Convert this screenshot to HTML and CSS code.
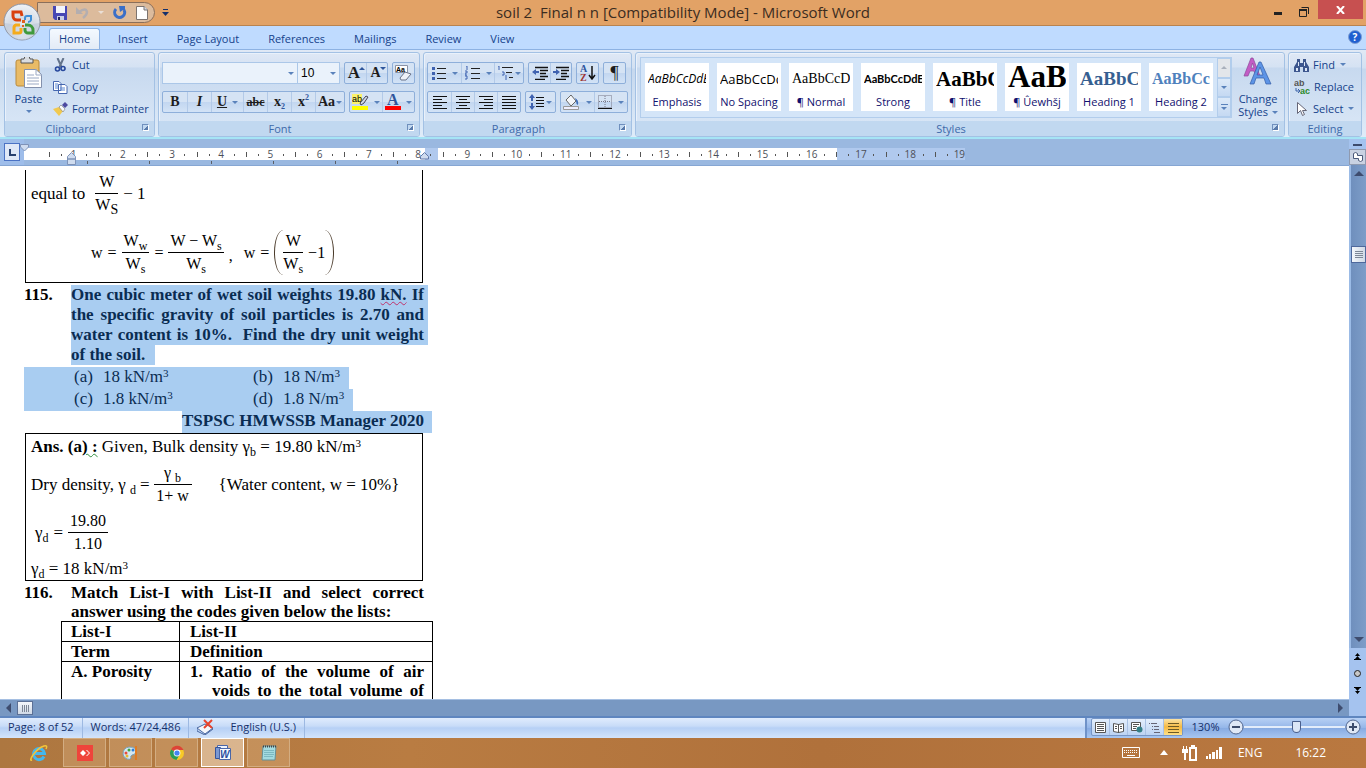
FILE: index.html
```
<!DOCTYPE html>
<html lang="en">
<head>
    <meta charset="UTF-8">
    <meta name="viewport" content="width=device-width, initial-scale=1.0">
    <title>soil 2 Final n n [Compatibility Mode] - Microsoft Word</title>
    <link rel="stylesheet" href="styles.css">
</head>
<body>
    <!-- Title bar -->
    <header class="titlebar">
        <button class="orb" aria-label="Office Button">
            <svg width="38" height="38" viewBox="0 0 38 38">
                <defs>
                    <radialGradient id="orbFill" cx="50%" cy="85%" r="90%">
                        <stop offset="0" stop-color="#ffffff"/>
                        <stop offset="0.5" stop-color="#d3dae4"/>
                        <stop offset="1" stop-color="#f4f6f9"/>
                    </radialGradient>
                </defs>
                <circle cx="19" cy="19" r="18" fill="url(#orbFill)" stroke="#8d95a5"/>
                <path d="M2 20a17 17 0 0 0 34 0q-17 4-34 0z" fill="#b8c4d6" opacity=".5"/>
                <g fill="none" stroke-width="3">
                    <path d="M18 17h-4a4 4 0 0 1-4-4V9h8l1 4" stroke="#d9400e"/>
                    <path d="M22 17v-2a2 2 0 0 1 2-2h4v4a3 3 0 0 1-3 2" stroke="#3f8fd8" stroke-width="2"/>
                    <path d="M17 22h-4a3 3 0 0 0-2 3v5h5a2 2 0 0 0 2-2v-3" stroke="#f5ab1b"/>
                    <path d="M22 22h3a5 5 0 0 1 5 5v3h-5a3 3 0 0 1-3-3v-2" stroke="#3f9a3c"/>
                </g>
                <path d="M19 17h3v3h-3zM19 22h2v2h-2z" fill="#e0601c"/>
            </svg>
        </button>
        <div class="quick">
            <button aria-label="Save">
                <svg width="14" height="14" viewBox="0 0 14 14"><path d="M0 0h14v14H2l-2-2z" fill="#4747b4"/><path d="M3 0h9v7H3z" fill="#f2f4fb"/><path d="M4 10h7v4H4z" fill="#c9cfe6"/><path d="M5 11h2v3H5z" fill="#22225e"/></svg>
            </button>
            <button aria-label="Undo">
                <svg width="13" height="13" viewBox="0 0 13 13"><path d="M3 6q7-5 8 0 0 3-4 6" fill="none" stroke="#b3aeb0" stroke-width="2.4"/><path d="M0 1v7h7z" fill="#b3aeb0"/></svg>
            </button>
            <i class="arr arr-pale"></i>
            <button aria-label="Redo">
                <svg width="14" height="14" viewBox="0 0 14 14"><path d="M3 3a5 5 0 1 0 8 1" fill="none" stroke="#3a6fc8" stroke-width="3"/><path d="M6 0h6v6l-2-2-3 2z" fill="#3a6fc8"/></svg>
            </button>
            <button aria-label="New">
                <svg width="12" height="14" viewBox="0 0 12 14"><path d="M.5.5H8L11.500 4v9.500H.5z" fill="#fff" stroke="#7c7470"/><path d="M8 0v4h4" fill="#cdd6e4" stroke="#7c7470"/></svg>
            </button>
        </div>
        <button class="customize" aria-label="Customize Quick Access Toolbar">
            <svg width="7" height="8" viewBox="0 0 7 8"><path d="M1 0h5v1H1zM0 3h7L3.500 7z" fill="#15306b"/></svg>
        </button>
        <h1 class="title">soil 2&nbsp; Final n n [Compatibility Mode] - Microsoft Word</h1>
        <div class="window-buttons">
            <button aria-label="Minimize"><svg width="8" height="14"><path d="M0 9h8v3H0z" fill="#222"/></svg></button>
            <button aria-label="Restore"><svg width="10" height="14"><path d="M2.500 4.500h7V11M.5 6.500h7v7h-7z" fill="none" stroke="#222"/><path d="M0 6h8v2H0z" fill="#222"/></svg></button>
            <button class="close" aria-label="Close"><svg width="9" height="8" viewBox="0 0 9 8"><path d="M1 0l7 8M8 0L1 8" stroke="#fff" stroke-width="2"/></svg></button>
        </div>
    </header>

    <nav class="tabs">
        <button class="tab active">Home</button>
        <button class="tab">Insert</button>
        <button class="tab">Page Layout</button>
        <button class="tab">References</button>
        <button class="tab">Mailings</button>
        <button class="tab">Review</button>
        <button class="tab">View</button>
        <button class="help" aria-label="Help">?</button>
    </nav>

    <!-- Ribbon -->
    <section class="ribbon">
        <div class="group clipboard">
            <div class="group-body">
                <button class="big">
                    <svg width="28" height="32" viewBox="0 0 28 32"><rect x="1" y="3" width="23" height="26" rx="2" fill="#e9bb66" stroke="#b98b3d"/><path d="M6 2h3a3 3 0 0 1 6 0h3v4H6z" fill="#d9dce0" stroke="#555"/><path d="M9.500 12.500H21l5.500 5V30.500h-17z" fill="#fff" stroke="#8391ad"/><path d="M21 12v6h6M12 18h7M12 21h12M12 24h12M12 27h12" fill="none" stroke="#9aa9c4"/></svg>
                    <span>Paste</span>
                    <i class="arr"></i>
                </button>
                <div class="stack">
                    <button><svg width="14" height="14" viewBox="0 0 14 14"><path d="M4 0l4 9M10 0L6 9" stroke="#64748b" stroke-width="2"/><circle cx="4" cy="11" r="2" fill="none" stroke="#27489c" stroke-width="1.600"/><circle cx="9.500" cy="10.500" r="2" fill="none" stroke="#27489c" stroke-width="1.600"/></svg>Cut</button>
                    <button><svg width="15" height="13" viewBox="0 0 15 13"><path d="M.5.5H6l2 2v7H.5zM5.500 3.500H12l2 2v7H5.500z" fill="#fff" stroke="#4567b0"/><path d="M2 3h3M2 5h3M2 7h3M7 7h5M7 9h5" stroke="#5a87d0"/></svg>Copy</button>
                    <button><svg width="15" height="14" viewBox="0 0 15 14"><path d="M0 7l6-2 4 4-4 5z" fill="#f1c94f"/><path d="M6 5l2-2 4 4-2 3z" fill="#fafafa" stroke="#777" stroke-width=".6"/><path d="M9 3l3-3 3 3-3 3z" fill="#4d4aa0"/></svg>Format Painter</button>
                </div>
            </div>
            <div class="group-label">Clipboard<i class="launch"></i></div>
        </div>

        <div class="group font">
            <div class="group-body rows">
                <div class="row">
                    <div class="combos">
                        <label class="combo name"><select aria-label="Font"><option></option></select></label>
                        <label class="combo size"><select aria-label="Font size"><option>10</option></select></label>
                    </div>
                    <div class="bar">
                        <button aria-label="Grow Font"><span class="serif big-a">A</span><i class="arr up"></i></button>
                        <button aria-label="Shrink Font"><span class="serif">A</span><i class="arr raised"></i></button>
                    </div>
                    <div class="bar">
                        <button aria-label="Clear Formatting"><svg width="17" height="16" viewBox="0 0 17 16"><path d="M.5.5h12v7H.5z" fill="#fff" stroke="#8a93a6"/><text x="1" y="7" font-family="Liberation Sans" font-size="7" font-weight="bold">Aa</text><path d="M5 13l5-6 6 2-5 6H6z" fill="#eef1f8" stroke="#6b7388"/></svg></button>
                    </div>
                </div>
                <div class="row">
                    <div class="bar roomy">
                        <button><b class="serif">B</b></button>
                        <button><em class="serif">I</em></button>
                        <button class="split"><u class="serif">U</u><i class="arr"></i></button>
                        <button><s class="serif">abc</s></button>
                        <button class="serif">x<sub>2</sub></button>
                        <button class="serif">x<sup>2</sup></button>
                        <button class="tight"><span class="serif">Aa</span><i class="arr"></i></button>
                    </div>
                    <div class="bar">
                        <button class="split" aria-label="Text Highlight Color"><svg width="17" height="16" viewBox="0 0 17 16"><path d="M0 0h10v10H0z" fill="#fbf36b"/><text x="0" y="8" font-family="Liberation Sans" font-size="9">ab</text><path d="M8 9l6-7 2 1-4 6-3 2z" fill="#cfd8e8" stroke="#445"/><path d="M0 12h16v4H0z" fill="#ff0"/></svg><i class="arr"></i></button>
                        <button class="split" aria-label="Font Color"><svg width="16" height="16" viewBox="0 0 16 16"><text x="2" y="11" font-family="Liberation Serif" font-size="16" font-weight="bold" fill="#2f559c">A</text><path d="M0 12h16v4H0z" fill="#f00"/></svg><i class="arr"></i></button>
                    </div>
                </div>
            </div>
            <div class="group-label">Font<i class="launch"></i></div>
        </div>

        <div class="group paragraph">
            <div class="group-body rows">
                <div class="row">
                    <div class="bar roomy">
                        <button class="split" aria-label="Bullets"><svg width="14" height="14"><path d="M5 2.500h9M5 7.500h9M5 12.500h9" stroke="#222"/><path d="M0 1h3v3H0zM0 6h3v3H0zM0 11h3v3H0z" fill="#3f62b0"/></svg><i class="arr"></i></button>
                        <button class="split" aria-label="Numbering"><svg width="15" height="14"><path d="M6 2.500h9M6 7.500h9M6 12.500h9" stroke="#222"/><path d="M1 0h1v4M0 5h2v2H0v2h2M0 10h2v3H0" fill="none" stroke="#3f62b0"/></svg><i class="arr"></i></button>
                        <button class="tight" aria-label="Multilevel List"><svg width="17" height="14"><path d="M5 1.500h11M9 6.500h6M12 11.500h4" stroke="#222"/><path d="M1 0h1v4M5 6h2v3H5M9 9v5" fill="none" stroke="#3f62b0"/></svg><i class="arr"></i></button>
                    </div>
                    <div class="bar">
                        <button aria-label="Decrease Indent"><svg width="16" height="14"><path d="M3 1.500h13M8 4.500h8M8 7.500h6M8 10.500h8M3 13.500h10" stroke="#111" stroke-width="1.500"/><path d="M0 6l4-3v6zM4 5h3v2H4z" fill="#3f62b0"/></svg></button>
                        <button aria-label="Increase Indent"><svg width="16" height="14"><path d="M3 1.500h13M8 4.500h8M8 7.500h6M8 10.500h8M3 13.500h10" stroke="#111" stroke-width="1.500"/><path d="M7 6L3 3v6zM0 5h3v2H0z" fill="#3f62b0"/></svg></button>
                    </div>
                    <div class="bar">
                        <button aria-label="Sort"><svg width="16" height="16"><text x="0" y="7" font-family="Liberation Serif" font-size="10" font-weight="bold" fill="#2f559c">A</text><text x="0" y="16" font-family="Liberation Serif" font-size="10" font-weight="bold" fill="#9e3535">Z</text><path d="M12 1v12M9 10l3 4 3-4" fill="none" stroke="#111" stroke-width="1.500"/></svg></button>
                    </div>
                    <div class="bar"><button class="pilcrow" aria-label="Show paragraph marks">¶</button></div>
                </div>
                <div class="row">
                    <div class="bar roomy aligns">
                        <button aria-label="Align Left"><svg width="14" height="13"><path d="M0 .5h14M0 3.500h9M0 6.500h14M0 9.500h9M0 12.500h14" stroke="#111"/></svg></button>
                        <button aria-label="Center"><svg width="14" height="13"><path d="M0 .5h14M3 3.500h8M0 6.500h14M3 9.500h8M0 12.500h14" stroke="#111"/></svg></button>
                        <button aria-label="Align Right"><svg width="14" height="13"><path d="M0 .5h14M5 3.500h9M0 6.500h14M5 9.500h9M0 12.500h14" stroke="#111"/></svg></button>
                        <button aria-label="Justify"><svg width="14" height="13"><path d="M0 .5h14M0 3.500h14M0 6.500h14M0 9.500h14M0 12.500h14" stroke="#111"/></svg></button>
                    </div>
                    <div class="bar">
                        <button class="tight" aria-label="Line spacing"><svg width="16" height="16"><path d="M7 3.500h8M7 6.500h8M7 9.500h8M7 12.500h8" stroke="#111"/><path d="M3 0l3 4H0zM3 16l3-4H0zM2 4h2v3H2zM2 9h2v3H2z" fill="#3f62b0"/></svg><i class="arr"></i></button>
                    </div>
                    <div class="bar">
                        <button class="split" aria-label="Shading"><svg width="17" height="16"><path d="M3 6l5-5 5 6-5 5z" fill="#f4f6fa" stroke="#666"/><path d="M12 4q4 2 3 7-2-1-2-4z" fill="#3b6cb8"/><path d="M.5 12.500h15v3H.5z" fill="#eef" stroke="#999"/></svg><i class="arr"></i></button>
                        <button class="split" aria-label="Borders"><svg width="14" height="14"><path d="M.5.5h13v12H.5zM7 1v11M1 6.500h12" fill="none" stroke="#778" stroke-dasharray="1 1"/><path d="M0 13.500h14" stroke="#111"/></svg><i class="arr"></i></button>
                    </div>
                </div>
            </div>
            <div class="group-label">Paragraph<i class="launch"></i></div>
        </div>

        <div class="group styles">
            <div class="group-body">
                <div class="gallery">
                    <div class="cards">
                        <button class="card"><span class="sample emphasis">AaBbCcDdE</span><span>Emphasis</span></button>
                        <button class="card"><span class="sample spacing">AaBbCcDd</span><span>No Spacing</span></button>
                        <button class="card"><span class="sample normal">AaBbCcDd</span><span>¶ Normal</span></button>
                        <button class="card"><span class="sample strong">AaBbCcDdE</span><span>Strong</span></button>
                        <button class="card"><span class="sample head-title">AaBbC</span><span>¶ Title</span></button>
                        <button class="card"><span class="sample huge">AaB</span><span>¶ Ûewhšj</span></button>
                        <button class="card"><span class="sample h-one">AaBbCc</span><span>Heading 1</span></button>
                        <button class="card"><span class="sample h-two">AaBbCc</span><span>Heading 2</span></button>
                    </div>
                    <div class="gallery-nav">
                        <button aria-label="Scroll up"><i class="arr up grey"></i></button>
                        <button aria-label="Scroll down"><i class="arr"></i></button>
                        <button class="more" aria-label="More styles"><i class="arr"></i></button>
                    </div>
                </div>
                <button class="big change">
                    <svg width="30" height="28" viewBox="0 0 30 28"><path d="M1 19L8 1h2l7 18h-4l-2-5H7l-2 5zM8 11h3L9.500 6z" fill="#c35cc5" stroke="#8d4a9b" stroke-width=".7"/><path d="M7 27L16 5h2l10 22h-5l-2-6h-8l-2 6zM14 18h6l-3-8z" fill="#5d94e6" stroke="#345da6" stroke-width=".7"/></svg>
                    <span>Change</span>
                    <span>Styles <i class="arr"></i></span>
                </button>
            </div>
            <div class="group-label">Styles<i class="launch"></i></div>
        </div>

        <div class="group editing">
            <div class="group-body">
                <div class="stack">
                    <button><svg width="15" height="13" viewBox="0 0 15 13"><path d="M3 0h3v4h3V0h3v3l3 5v5H9V8H6v5H0V8l3-5z" fill="#3c568e"/><path d="M2 9h2v3H2zM11 9h2v3h-2zM4 3h1v4H4zM10 3h1v4h-1z" fill="#dce6f6"/></svg>Find <i class="arr"></i></button>
                    <button><svg width="16" height="14" viewBox="0 0 16 14"><text x="0" y="6" font-family="Liberation Sans" font-size="9" font-weight="bold" fill="#555">ab</text><text x="6" y="14" font-family="Liberation Sans" font-size="9" font-weight="bold" fill="#2b8a2b">ac</text><path d="M2 8v3h4M4 9l2 2-2 2" fill="none" stroke="#3b62a8"/></svg>Replace</button>
                    <button><svg width="15" height="14" viewBox="0 0 15 14"><path d="M3.500.5v11l3-3 2 5 2-1-2-4h4z" fill="#fff" stroke="#667"/></svg>Select <i class="arr"></i></button>
                </div>
            </div>
            <div class="group-label">Editing</div>
        </div>
    </section>

    <!-- Ruler, page and scroll bars -->
    <main class="workspace">
        <div class="left">
            <div class="ruler">
                <button class="tab-stop" aria-label="Left tab"><svg width="7" height="7"><path d="M1 0v6h6" fill="none" stroke="#26406f" stroke-width="2"/></svg></button>
                <div class="scale">
                    <div class="units">
                        <span>1</span><span>2</span><span>3</span><span>4</span><span>5</span><span>6</span><span>7</span><span>8</span><span>9</span><span>10</span><span>11</span><span>12</span><span>13</span><span>14</span><span>15</span><span>16</span><span>17</span><span>18</span><span>19</span>
                    </div>
                </div>
                <svg class="marker first" width="9" height="8"><path d="M.5.5h8V3l-4 4-4-4z" fill="#cfdcef" stroke="#7f93b8"/></svg>
                <svg class="marker hanging" width="9" height="13"><path d="M4.500.5l4 4V7h-8V4.500zM.5 7h8v5.500h-8z" fill="#cfdcef" stroke="#7f93b8"/></svg>
                <svg class="marker right" width="9" height="8"><path d="M4.500.5l4 4V7h-8V4.500z" fill="#cfdcef" stroke="#6079a8"/></svg>
            </div>

            <article class="doc">
                <div class="page">
                    <section class="box open">
                        <div class="eq first-eq">
                            <span class="lead">equal to</span>
                            <span class="frac"><span>W</span><span>W<sub class="cap">S</sub></span></span>
                            <span class="op">− 1</span>
                        </div>
                        <div class="eq second-eq">
                            <span>w</span><span class="op">=</span>
                            <span class="frac"><span>W<sub>w</sub></span><span>W<sub>s</sub></span></span>
                            <span class="op">=</span>
                            <span class="frac"><span>W − W<sub>s</sub></span><span>W<sub>s</sub></span></span>
                            <span class="comma">,</span>
                            <span>w</span><span class="op">=</span>
                            <span class="paren"><span class="frac"><span>W</span><span>W<sub>s</sub></span></span><span class="op last">−1</span></span>
                        </div>
                    </section>

                    <section class="question selected">
                        <b>115.</b>
                        <p>
                            <span class="line">One cubic meter of wet soil weights 19.80 <span class="typo">kN.</span> If</span>
                            <span class="line">the specific gravity of soil particles is 2.70 and</span>
                            <span class="line">water content is 10%.&nbsp; Find the dry unit weight</span>
                            <span class="line end">of the soil.</span>
                        </p>
                    </section>
                    <div class="options"><span>(a)</span><span>18 kN/m<sup>3</sup></span><span>(b)</span><span>18 N/m<sup>3</sup></span></div>
                    <div class="options wide"><span>(c)</span><span>1.8 kN/m<sup>3</sup></span><span>(d)</span><span>1.8 N/m<sup>3</sup></span></div>
                    <p class="source">TSPSC HMWSSB Manager 2020</p>

                    <section class="box answer">
                        <p><b>Ans. (a<span class="grammar">) :</span></b> Given, Bulk density γ<sub>b</sub> = 19.80 kN/m<sup>3</sup></p>
                        <div class="eq density">
                            <span>Dry density, γ <sub>d</sub></span><span class="op">=</span>
                            <span class="frac"><span>γ <sub>b</sub></span><span>1+ w</span></span>
                            <span class="note">{Water content, w = 10%}</span>
                        </div>
                        <div class="eq value">
                            <span>γ<sub>d</sub></span><span class="op">=</span>
                            <span class="frac"><span>19.80</span><span>1.10</span></span>
                        </div>
                        <p>γ<sub>d</sub> = 18 kN/m<sup>3</sup></p>
                    </section>

                    <section class="question">
                        <b>116.</b>
                        <p>
                            <span class="line">Match List-I with List-II and select correct</span>
                            <span class="line end">answer using the codes given below the lists:</span>
                        </p>
                    </section>
                    <table class="lists">
                        <tr><th>List-I</th><th>List-II</th></tr>
                        <tr><th>Term</th><th>Definition</th></tr>
                        <tr>
                            <td>A. Porosity</td>
                            <td><div class="item"><span>1.</span><p><span class="line">Ratio of the volume of air</span><span class="line">voids to the total volume of</span></p></div></td>
                        </tr>
                    </table>
                </div>
            </article>

            <div class="hscroll">
                <i class="tri west"></i>
                <span class="thumb"></span>
                <i class="tri east"></i>
            </div>
        </div>

        <div class="vscroll">
            <i class="splitter"></i>
            <button class="ruler-toggle" aria-label="View Ruler"><svg width="12" height="12"><path d="M1.500 2.500l2-1 2 1v2h5v5l-2 1-2-1v-2h-5z" fill="#fff" stroke="#4a5878"/></svg></button>
            <div class="track">
                <i class="tri north"></i>
                <span class="thumb"></span>
                <i class="tri south"></i>
            </div>
            <div class="browse">
                <button aria-label="Previous Page"><svg width="7" height="7"><path d="M3.500 0L6 3H1zM3.500 3L6 6H1zM0 6h7v1H0z"/></svg></button>
                <button aria-label="Select Browse Object"><svg width="7" height="7"><circle cx="3.500" cy="3.500" r="3" fill="#c8c8c8" stroke="#222"/></svg></button>
                <button aria-label="Next Page"><svg width="7" height="7"><path d="M0 0h7v1H0zM3.500 4L6 1H1zM3.500 7L6 4H1z"/></svg></button>
            </div>
        </div>
    </main>

    <footer class="status">
        <button>Page: 8 of 52</button>
        <button>Words: 47/24,486</button>
        <button class="proof" aria-label="Proofing errors"><svg width="17" height="16" viewBox="0 0 17 16"><path d="M0 9l8-4 8 4-8 6z" fill="#f5f7fb" stroke="#47659e"/><path d="M0 10v2l8 4 8-6" fill="none" stroke="#47659e"/><path d="M7 1l8 8M15 1L7 9" stroke="#e8432c" stroke-width="2"/></svg></button>
        <button class="lang">English (U.S.)</button>
        <div class="status-right">
            <div class="views">
                <button aria-label="Print Layout"><svg width="11" height="11"><path d="M.5.5h10v10H.5z" fill="#fff" stroke="#555"/><path d="M2 2.500h7M2 4.500h7M2 6.500h7M2 8.500h7" stroke="#555"/></svg></button>
                <button aria-label="Full Screen Reading"><svg width="11" height="11"><path d="M.5 1.500l5 1 5-1v8l-5 1-5-1zM5.500 2v9" fill="#fff" stroke="#555"/><path d="M2 4.500h2M2 6.500h2M7 4.500h2M7 6.500h2" stroke="#555"/></svg></button>
                <button aria-label="Web Layout"><svg width="12" height="11"><path d="M.5.5h9v8h-9z" fill="#fff" stroke="#555"/><path d="M2 2.500h6M2 4.500h4M2 6.500h3" stroke="#555"/><circle cx="8.500" cy="7.500" r="3" fill="#337f86"/></svg></button>
                <button aria-label="Outline"><svg width="11" height="11"><path d="M0 1.500h1M2 1.500h6M3 4.500h1M5 4.500h5M3 7.500h1M5 7.500h5M5 10.500h6" stroke="#667"/></svg></button>
                <button class="on" aria-label="Draft"><svg width="11" height="11"><path d="M0 1.500h11M0 4.500h11M0 7.500h11M0 10.500h11" stroke="#6d5a26"/></svg></button>
            </div>
            <button class="percent">130%</button>
            <button class="zoom-btn" aria-label="Zoom out"><svg width="16" height="16"><circle cx="8" cy="8" r="7" fill="#dfe8f6" stroke="#52678f"/><path d="M4 8h8" stroke="#3d4c6b" stroke-width="2"/></svg></button>
            <input type="range" min="0" max="100" value="52" aria-label="Zoom">
            <button class="zoom-btn" aria-label="Zoom in"><svg width="16" height="16"><circle cx="8" cy="8" r="7" fill="#dfe8f6" stroke="#52678f"/><path d="M4 8h8M8 4v8" stroke="#3d4c6b" stroke-width="2"/></svg></button>
        </div>
    </footer>

    <div class="taskbar">
        <button class="plain" aria-label="Internet Explorer"><svg width="18" height="18" viewBox="0 0 18 18"><path d="M14 12.500A5.500 5.500 0 1 1 14.500 9.500H5" fill="none" stroke="#44b8ee" stroke-width="3"/><path d="M2 16Q-1 17 3 11 8 4 14 2q4-1 2 3" fill="none" stroke="#f2c53a" stroke-width="1.500"/></svg></button>
        <button aria-label="AnyDesk"><svg width="16" height="16"><path d="M0 0h16v16H0z" fill="#ef443b"/><path d="M6 5l3 3-3 3-3-3zM9 5l1 0 3 3-3 3H9l3-3z" fill="#fff"/></svg></button>
        <button aria-label="Paint"><svg width="17" height="16"><path d="M1 9q0-6 6-7 8 0 7 5-1 3-4 3-2 1-1 3-1 2-4 1-4-2-4-5z" fill="#d4e7f2" stroke="#7aa2b8"/><circle cx="4" cy="8" r="1.500" fill="#e74c3c"/><circle cx="7" cy="5" r="1.500" fill="#3fa33f"/><circle cx="11" cy="5" r="1.500" fill="#2f7ed8"/><circle cx="5" cy="11" r="1.500" fill="#e8b92f"/><path d="M14 1v14" stroke="#e07b22" stroke-width="2"/></svg></button>
        <button aria-label="Chrome"><svg width="16" height="16" viewBox="0 0 16 16"><circle cx="8" cy="8" r="7" fill="#f8c927"/><path d="M8 8L2 4.400A7 7 0 0 1 14.500 5H8z" fill="#dc4437"/><path d="M8 8L2 4.400A7 7 0 0 0 7.500 15L11 9z" fill="#2a9d58"/><circle cx="8" cy="8" r="3.400" fill="#fff"/><circle cx="8" cy="8" r="2.600" fill="#4384f3"/></svg></button>
        <button class="current" aria-label="Word"><svg width="16" height="16"><path d="M2.500.5h10v12h-10z" fill="#eef3fc" stroke="#4a66a8"/><path d="M.5 2.500h5v11h-5z" fill="#7b98d2" stroke="#35549c"/><path d="M4.500 3.500h11v11h-11z" fill="#f6f9ff" stroke="#4a66a8"/><text x="5" y="13" font-family="Liberation Sans" font-size="10" font-weight="bold" font-style="italic" fill="#2c4f9f">W</text></svg></button>
        <button aria-label="Notepad"><svg width="16" height="16"><path d="M2 1h13l-1 14H1z" fill="#a3dbe0" stroke="#648f97"/><path d="M3 5.500h10M3 7.500h10M3 9.500h10M3 11.500h9" stroke="#7cb9c1"/><path d="M2 1.500h13" stroke="#444" stroke-width="2" stroke-dasharray="1 1"/></svg></button>
        <div class="tray">
            <svg class="kb" width="18" height="11"><path d="M.5.5h17v10H.5z" fill="none" stroke="#fff"/><path d="M2 3.500h14M2 5.500h14" stroke="#fff" stroke-dasharray="1 1"/><path d="M5 8.500h8" stroke="#fff"/></svg>
            <svg class="chev" width="8" height="5"><path d="M4 0l4 5H0z" fill="#fff"/></svg>
            <svg class="bat" width="15" height="16"><path d="M8 3h6v12H8z" fill="none" stroke="#fff" stroke-width="2"/><path d="M9 0h4v2H9zM1 1h1v4H1zM4 1h1v4H4zM0 4h6v4H4v7H2V8H0z" fill="#fff"/></svg>
            <svg class="sig" width="16" height="12"><path d="M0 9h2v3H0zM3 7h2v5H3zM6 5h3v7H6zM10 3h2v9h-2zM13 0h3v12h-3z" fill="#fff"/></svg>
            <span class="eng">ENG</span>
            <time>16:22</time>
        </div>
    </div>
</body>
</html>
```
FILE: styles.css
```
* {
    box-sizing: border-box;
}

body {
    margin: 0;
    height: 100vh;
    display: flex;
    flex-direction: column;
    overflow: hidden;
    font-family: "Open Sans", "Noto Sans", sans-serif;
    font-size: 11px;
    line-height: 14px;
    color: #15428b;
    background: #bfdbff;
}

button {
    margin: 0;
    padding: 0;
    border: 0;
    background: none;
    font: inherit;
    color: inherit;
    display: flex;
    align-items: center;
    justify-content: center;
    white-space: nowrap;
}

svg {
    display: block;
    flex: none;
}

p {
    margin: 0;
}

/* down arrows in drop buttons */
.arr {
    display: inline-block;
    flex: none;
    width: 0;
    height: 0;
    border: 3px solid transparent;
    border-top-color: #5a82bb;
    border-bottom-width: 0;
}

.arr.up {
    border-bottom: 3px solid #2e569c;
    border-top-width: 0;
}

.arr.grey {
    border-bottom-color: #a9b0bc;
}

.arr-pale {
    border-top-color: #eadfd6;
}

/* ---------- title bar ---------- */
.titlebar {
    position: relative;
    flex: none;
    height: 26px;
    display: flex;
    align-items: center;
    background: #e2a266;
    border-bottom: 1px solid #b9834f;
}

.orb {
    position: absolute;
    left: 3px;
    top: 3px;
    z-index: 2;
}

.quick {
    display: flex;
    align-items: center;
    gap: 9px;
    width: 118px;
    height: 21px;
    margin-left: 37px;
    padding-left: 15px;
    border: 1px solid #8a6f5b;
    border-radius: 0 11px 11px 0;
    background: #dcbb9c;
}

.customize {
    margin-left: 7px;
}

.title {
    position: absolute;
    left: 0;
    right: 0;
    margin: 0;
    text-align: center;
    font-size: 15px;
    font-weight: 400;
    line-height: 27px;
    color: #3b2c1f;
    pointer-events: none;
}

.window-buttons {
    margin-left: auto;
    align-self: flex-start;
    display: flex;
    gap: 17px;
    margin-right: 3px;
}

.window-buttons .close {
    width: 45px;
    height: 19px;
    margin-left: -8px;
    background: #c75050;
}

/* ---------- tabs ---------- */
.tabs {
    flex: none;
    height: 23px;
    display: flex;
    align-items: flex-end;
    gap: 7px;
    padding: 0 4px 0 49px;
    background: #bfdbff;
}

.tab {
    height: 21px;
    padding: 0 11px;
}

.tab.active {
    padding: 0 9px;
    border: 1px solid #8db2e3;
    border-bottom: 0;
    border-radius: 3px 3px 0 0;
    background: linear-gradient(#f4f9ff, #e3ebf6);
}

.help {
    width: 14px;
    height: 14px;
    margin: 0 0 5px auto;
    border: 1px solid #7f9fd4;
    border-radius: 50%;
    background: #1f5fd0;
    color: #fff;
    font-size: 10px;
    font-weight: 700;
    line-height: 12px;
}

/* ---------- ribbon ---------- */
.ribbon {
    flex: none;
    display: flex;
    gap: 3px;
    height: 90px;
    padding: 2px 4px;
    border-top: 1px solid #8db2e3;
    border-bottom: 2px solid #a5e4f5;
    background: linear-gradient(#e0e9f5 0, #d3e1f2 18px, #c6d8ee 19px, #dfecf9 100%);
}

.group {
    display: flex;
    flex-direction: column;
    flex: none;
    height: 85px;
    border: 1px solid #a3c1e4;
    border-radius: 3px;
    box-shadow: inset 1px 1px 0 #e9f1fb;
    background: linear-gradient(#dfe8f5 0, #d5e2f3 14px, #c7d9ef 15px, #dbe8f7 100%);
    overflow: hidden;
}

.group-body {
    flex: 1;
    display: flex;
    min-width: 0;
}

.group-label {
    flex: none;
    display: flex;
    align-items: center;
    justify-content: center;
    position: relative;
    height: 15px;
    padding-right: 18px;
    background: #c1d8f0;
    color: #3e6aaa;
}

.editing .group-label {
    padding-right: 0;
}

.launch {
    position: absolute;
    right: 5px;
    top: 3px;
    width: 7px;
    height: 7px;
    border: 1px solid #6f8fbd;
    border-right-color: #fff;
    border-bottom-color: #fff;
    background: linear-gradient(135deg, transparent 50%, #5a7bab 50%);
}

.clipboard { width: 151px; }
.font { width: 262px; }
.paragraph { width: 209px; }
.styles { flex: 1; min-width: 0; }
.editing { width: 74px; }

.big {
    flex-direction: column;
    justify-content: flex-start;
    width: 47px;
    padding-top: 4px;
}

.big svg {
    margin-bottom: 3px;
}

.big > .arr {
    margin-top: 4px;
}

.stack {
    display: flex;
    flex-direction: column;
    padding-top: 1px;
}

.stack button {
    justify-content: flex-start;
    gap: 4px;
    height: 22px;
}

.clipboard .stack {
    padding-left: 1px;
}

.clipboard .stack svg {
    width: 15px;
}

.editing .stack {
    padding-left: 5px;
}

.rows {
    flex-direction: column;
    gap: 7px;
    padding: 9px 3px 0;
}

.row {
    display: flex;
    gap: 4px;
}

.bar {
    display: flex;
    height: 22px;
    border: 1px solid #8eafda;
    border-radius: 2px;
    background: linear-gradient(#d5e3f4 50%, #c2d6f0 50%, #d3e3f6);
    color: #1d1d1d;
}

.bar button {
    width: 21px;
    border-left: 1px solid #b3cae8;
}

.bar button:first-child {
    border-left: 0;
}

.roomy button {
    width: 24px;
}

.aligns button {
    width: 23px;
}

.bar .split {
    width: 33px;
    gap: 6px;
}

.bar .tight {
    width: 29px;
    gap: 1px;
}

.font .bar .split {
    width: 32px;
    gap: 5px;
}

.serif {
    font-family: "Liberation Serif", serif;
    font-size: 14px;
    font-weight: 700;
}

.bar s.serif {
    font-size: 12px;
}

.big-a {
    font-size: 17px;
}

.bar .arr.up,
.bar .arr.raised {
    align-self: flex-start;
    margin: 4px -2px 0 -1px;
}

.bar .arr.raised {
    border-top-color: #2e569c;
}

.bar sub,
.bar sup {
    font-size: 8px;
    line-height: 8px;
    color: #2e569c;
}

.bar sub { margin-top: 9px; }
.bar sup { margin-bottom: 8px; }

.pilcrow {
    font-family: "Liberation Serif", serif;
    font-size: 18px;
}

.combos {
    display: flex;
}

.combo {
    position: relative;
    height: 22px;
    border: 1px solid #abc7e8;
    background: #eaf2fb;
}

.combo.name { width: 136px; }

.combo.size {
    width: 42px;
    border-left: 0;
}

.combo select {
    width: 100%;
    height: 20px;
    padding: 0 3px;
    border: 0;
    appearance: none;
    background: none;
    font: 12px "Liberation Sans", sans-serif;
    color: #000;
}

.combo::after {
    content: "";
    position: absolute;
    right: 3px;
    top: 9px;
    border: 3px solid transparent;
    border-top-color: #5a82bb;
    border-bottom-width: 0;
}

/* styles gallery */
.gallery {
    flex: 1;
    min-width: 0;
    display: flex;
    height: 61px;
    margin: 4px 0 0 4px;
    border: 1px solid #b2cdec;
    background: #d4e5f8;
}

.cards {
    flex: 1;
    min-width: 0;
    display: flex;
    gap: 8px;
    padding: 5px 0 0 4px;
    overflow: hidden;
}

.card {
    flex: none;
    flex-direction: column;
    justify-content: flex-end;
    width: 64px;
    height: 48px;
    padding-bottom: 2px;
    background: #fff;
    color: #10106e;
    overflow: hidden;
}

.sample {
    align-self: stretch;
    height: 32px;
    margin: 0 3px;
    line-height: 32px;
    text-align: left;
    overflow: hidden;
    color: #000;
}

.emphasis { font-style: italic; font-size: 12px; }
.spacing { font-size: 13px; }
.strong { font-family: Lato, sans-serif; font-weight: 700; font-size: 11px; }
.normal { font-family: "Liberation Serif", serif; font-size: 14px; }
.head-title { font-family: "Liberation Serif", serif; font-weight: 700; font-size: 21px; }
.huge { font-family: "Liberation Serif", serif; font-weight: 700; font-size: 31px; line-height: 28px; }
.h-one { font-family: "Liberation Serif", serif; font-weight: 700; font-size: 19px; color: #365f91; }
.h-two { font-family: "Liberation Serif", serif; font-weight: 700; font-size: 16px; color: #4f81bd; }

.gallery-nav {
    width: 14px;
    display: flex;
    flex-direction: column;
}

.gallery-nav button {
    flex: 1;
    border: 1px solid #b2cdec;
    background: linear-gradient(#dce9f8, #c5d9f2);
}

.gallery-nav button:first-child {
    background: #e3e6ea;
}

.gallery-nav .more {
    flex-direction: column;
    gap: 2px;
}

.gallery-nav .more::before {
    content: "";
    width: 7px;
    height: 1px;
    background: #5a82bb;
}

.change {
    width: 52px;
}

.change svg {
    margin-bottom: 7px;
}

.change span {
    line-height: 13px;
}

.change .arr,
.editing .arr {
    margin: 0 0 2px 1px;
}

/* ---------- workspace ---------- */
.workspace {
    flex: 1;
    min-height: 0;
    display: flex;
}

.left {
    flex: 1;
    min-width: 0;
    display: flex;
    flex-direction: column;
}

.ruler {
    position: relative;
    flex: none;
    height: 27px;
    display: flex;
    border-bottom: 1px solid #86a6d3;
    background: #9ab8e0;
}

/* default tab marks under the scale */
.ruler::before {
    content: "";
    position: absolute;
    left: 87px;
    bottom: 1px;
    width: 313px;
    height: 3px;
    background: linear-gradient(90deg, #5c5f66 1px, transparent 1px) 0 0 / 62px 3px;
}

.tab-stop {
    flex: none;
    width: 24px;
    border: 4px solid #9ebdea;
    outline: 1px solid #4a72c4;
    outline-offset: -5px;
    background: #dfe8f7;
}

.scale {
    flex: none;
    width: 941px;
    height: 12px;
    margin-top: 9px;
    overflow: hidden;
    background: linear-gradient(90deg, #fff 401px, #b0c9ee 401px 414px, #fff 414px 813px, #b0c9ee 813px);
}

.units {
    display: grid;
    grid-template-columns: repeat(19, 1fr);
    width: 935px;
    margin-left: 25px;
    font-size: 10px;
    line-height: 12px;
    text-align: center;
    color: #4c4f57;
}

.units span {
    background:
        linear-gradient(#555, #555) 0 4px / 1px 5px no-repeat,
        linear-gradient(#555, #555) 12px 6px / 1px 2px no-repeat,
        linear-gradient(#555, #555) 37px 6px / 1px 2px no-repeat;
}

.marker {
    position: absolute;
}

.marker.first { left: 20px; top: 5px; }
.marker.hanging { left: 67px; top: 13px; }
.marker.right { left: 420px; top: 13px; }

.doc {
    flex: 1;
    min-height: 0;
    padding: 4px 0 0 24px;
    overflow: hidden;
    background: #fff;
    color: #000;
    font-family: "Liberation Serif", "Times New Roman", serif;
    font-size: 17px;
    line-height: 20px;
}

.page {
    width: 400px;
}

.page sub {
    font-size: 12px;
    line-height: 0;
    vertical-align: -4px;
}

.page sup {
    font-size: 11px;
    line-height: 0;
    vertical-align: 5px;
}

.page .cap {
    font-size: 14px;
}

.box {
    margin: 0 1px;
    padding: 3px 5px 1px;
    border: 1px solid #000;
}

.box.open {
    border-top: 0;
    padding: 1px 5px 7px;
}

.eq {
    display: flex;
    align-items: center;
    white-space: pre;
}

.op {
    margin: 0 5px;
}

.op.last {
    margin-right: 0;
}

.frac {
    display: flex;
    flex-direction: column;
    text-align: center;
    font-size: 16px;
    line-height: 22px;
}

.frac span:first-child {
    border-bottom: 1px solid #000;
    padding: 0 2px;
}

.first-eq .lead {
    margin-right: 10px;
}

.second-eq {
    margin-top: 14px;
    padding-left: 60px;
    font-size: 16px;
}

.comma {
    margin: 6px 11px 0 5px;
}

.paren {
    display: flex;
    align-items: center;
    padding: 0 8px;
    margin: -1px 0;
    border: solid #4a3a2a;
    border-width: 0 1px;
    border-radius: 10px / 24px;
}

.question {
    display: flex;
    margin-top: 2px;
    font-weight: 700;
    line-height: 19px;
}

.question > b {
    width: 47px;
}

.question > p {
    flex: 1;
}

.line {
    display: block;
    text-align-last: justify;
    white-space: nowrap;
}

.line.end {
    text-align-last: left;
}

.selected {
    line-height: 20px;
}

.selected .line {
    margin-right: -4px;
    padding-right: 4px;
    background: #a9cdf1;
    color: #0a2c52;
}

.selected .line.end {
    width: max-content;
    padding-right: 10px;
}

.typo {
    text-decoration: underline wavy #c0306a 1px;
}

.grammar {
    text-decoration: underline wavy #2f8f3f 1px;
}

.options {
    display: grid;
    grid-template-columns: 29px 150px 30px 1fr;
    width: 325px;
    height: 22px;
    padding-left: 50px;
    background: #a9cdf1;
    color: #0a2c52;
}

.selected + .options {
    margin-top: 2px;
}

.options.wide {
    width: 329px;
}

.source {
    width: max-content;
    height: 22px;
    margin: 0 -8px 0 auto;
    padding-right: 8px;
    font-weight: 700;
    background: #a9cdf1;
    color: #0a2c52;
}

.density {
    margin-top: 5px;
}

.density .op {
    margin: 0 4px;
}

.density .frac {
    width: 38px;
}

.note {
    margin-left: 27px;
}

.value {
    margin-top: 3px;
    padding-left: 4px;
}

.answer p:last-child {
    margin-top: 4px;
}

.lists {
    width: 372px;
    margin-left: 37px;
    border-collapse: collapse;
    font-weight: 700;
    line-height: 19px;
}

.lists th,
.lists td {
    padding: 0 8px 0 10px;
    border: 1px solid #000;
    text-align: left;
    vertical-align: top;
}

.lists td {
    height: 62px;
    white-space: nowrap;
}

.lists th:first-child,
.lists td:first-child {
    width: 118px;
    padding-left: 9px;
}

.item {
    display: flex;
}

.item > span {
    width: 22px;
}

.item p {
    flex: 1;
}

/* ---------- scroll bars ---------- */
.hscroll {
    flex: none;
    display: flex;
    align-items: center;
    height: 17px;
    padding: 0 6px;
    border-top: 1px solid #a5bfe2;
    background: #7898c2;
}

.tri {
    flex: none;
    width: 0;
    height: 0;
    border: 5px solid transparent;
}

.west { border-left-width: 0; border-right-color: #3e4c6e; }
.east { border-right-width: 0; border-left-color: #3e4c6e; margin-left: auto; }
.north { border-top-width: 0; border-bottom-color: #3e4c6e; }
.south { border-bottom-width: 0; border-top-color: #3e4c6e; margin-top: auto; }

.hscroll .thumb {
    width: 16px;
    height: 14px;
    margin-left: 6px;
    border: 1px solid #5b7096;
    background:
        repeating-linear-gradient(90deg, #7d8796 0 1px, transparent 1px 2px) center / 7px 7px no-repeat,
        linear-gradient(#f4f7fb, #cfd9e6);
}

.vscroll {
    flex: none;
    display: flex;
    flex-direction: column;
    align-items: center;
    width: 17px;
    background: #a5c3ef;
}

.splitter {
    flex: none;
    width: 9px;
    height: 2px;
    margin: 5px 0 3px;
    background: #3c4a6c;
}

.ruler-toggle {
    flex: none;
    width: 17px;
    height: 16px;
    border: 1px solid #8f9ab0;
    background: #c9d2e2;
}

.vscroll .track {
    flex: 1;
    display: flex;
    flex-direction: column;
    align-items: center;
    width: 17px;
    padding: 6px 0;
    border-left: 2px solid #9bbbe6;
    background: linear-gradient(90deg, #6f8fbd, #7d9dc8);
}

.vscroll .thumb {
    width: 15px;
    height: 17px;
    margin-top: 70px;
    border: 1px solid #4e689c;
    background:
        repeating-linear-gradient(#7d8796 0 1px, transparent 1px 2px) center / 8px 7px no-repeat,
        linear-gradient(90deg, #f4f7fb, #cfd9e6);
}

.browse {
    flex: none;
    display: flex;
    flex-direction: column;
    gap: 10px;
    height: 68px;
    padding-top: 5px;
}

/* ---------- status bar ---------- */
.status {
    flex: none;
    display: flex;
    align-items: stretch;
    height: 22px;
    border-top: 2px solid #5f86bf;
    background: linear-gradient(#e0ecfd, #c8dcf8 40%, #b6d0f5 50%, #d3e4fb);
    color: #15306b;
}

.status > button {
    padding: 0 8px 2px;
    border-right: 1px solid #9db9e2;
}

.status > button.proof {
    border-right: 0;
}

.status-right {
    display: flex;
    align-items: center;
    margin-left: auto;
    padding: 0 5px 2px 4px;
    border-left: 2px solid #6f92c8;
    background: linear-gradient(#b8d1f5, #93b5e8 50%, #86aae2 50%, #a8c6f0);
}

.views {
    display: flex;
    height: 18px;
    border: 1px solid #7796c6;
    border-radius: 2px;
    background: linear-gradient(#e3eefc, #bcd3f3);
}

.views button {
    width: 18px;
    border-right: 1px solid #a9c1e4;
}

.views .on {
    border-right: 0;
    background: linear-gradient(#fbe3a4, #f5b942 50%, #fde089);
}

.percent {
    width: 45px;
}

.status input {
    width: 101px;
    height: 16px;
    margin: 0;
    appearance: none;
    background: linear-gradient(#e3edfb, #e3edfb) center / 100% 2px no-repeat;
}

.status input::-webkit-slider-thumb {
    appearance: none;
    width: 9px;
    height: 12px;
    border: 1px solid #4a5f8c;
    border-radius: 1px 1px 5px 5px;
    background: #dce7f7;
}

/* ---------- taskbar ---------- */
.taskbar {
    flex: none;
    display: flex;
    gap: 3px;
    height: 30px;
    padding: 0 40px 1px 17px;
    background: linear-gradient(90deg, #ad7740, #b97c42 30%, #b0713b 60%, #b97840);
    color: #fff;
}

.taskbar button {
    width: 43px;
    border: 1px solid #d3ad82;
    background: rgba(255, 225, 180, .22);
}

.taskbar .plain {
    border-color: transparent;
    background: none;
}

.taskbar .current {
    border-color: #fff;
    background: rgba(255, 240, 220, .5);
}

.tray {
    display: flex;
    align-items: center;
    margin-left: auto;
    font-size: 12px;
}

.chev { margin-left: 20px; }
.bat { margin-left: 14px; }
.sig { margin-left: 9px; }
.eng { margin-left: 16px; }
.tray time { margin-left: 33px; }
```
